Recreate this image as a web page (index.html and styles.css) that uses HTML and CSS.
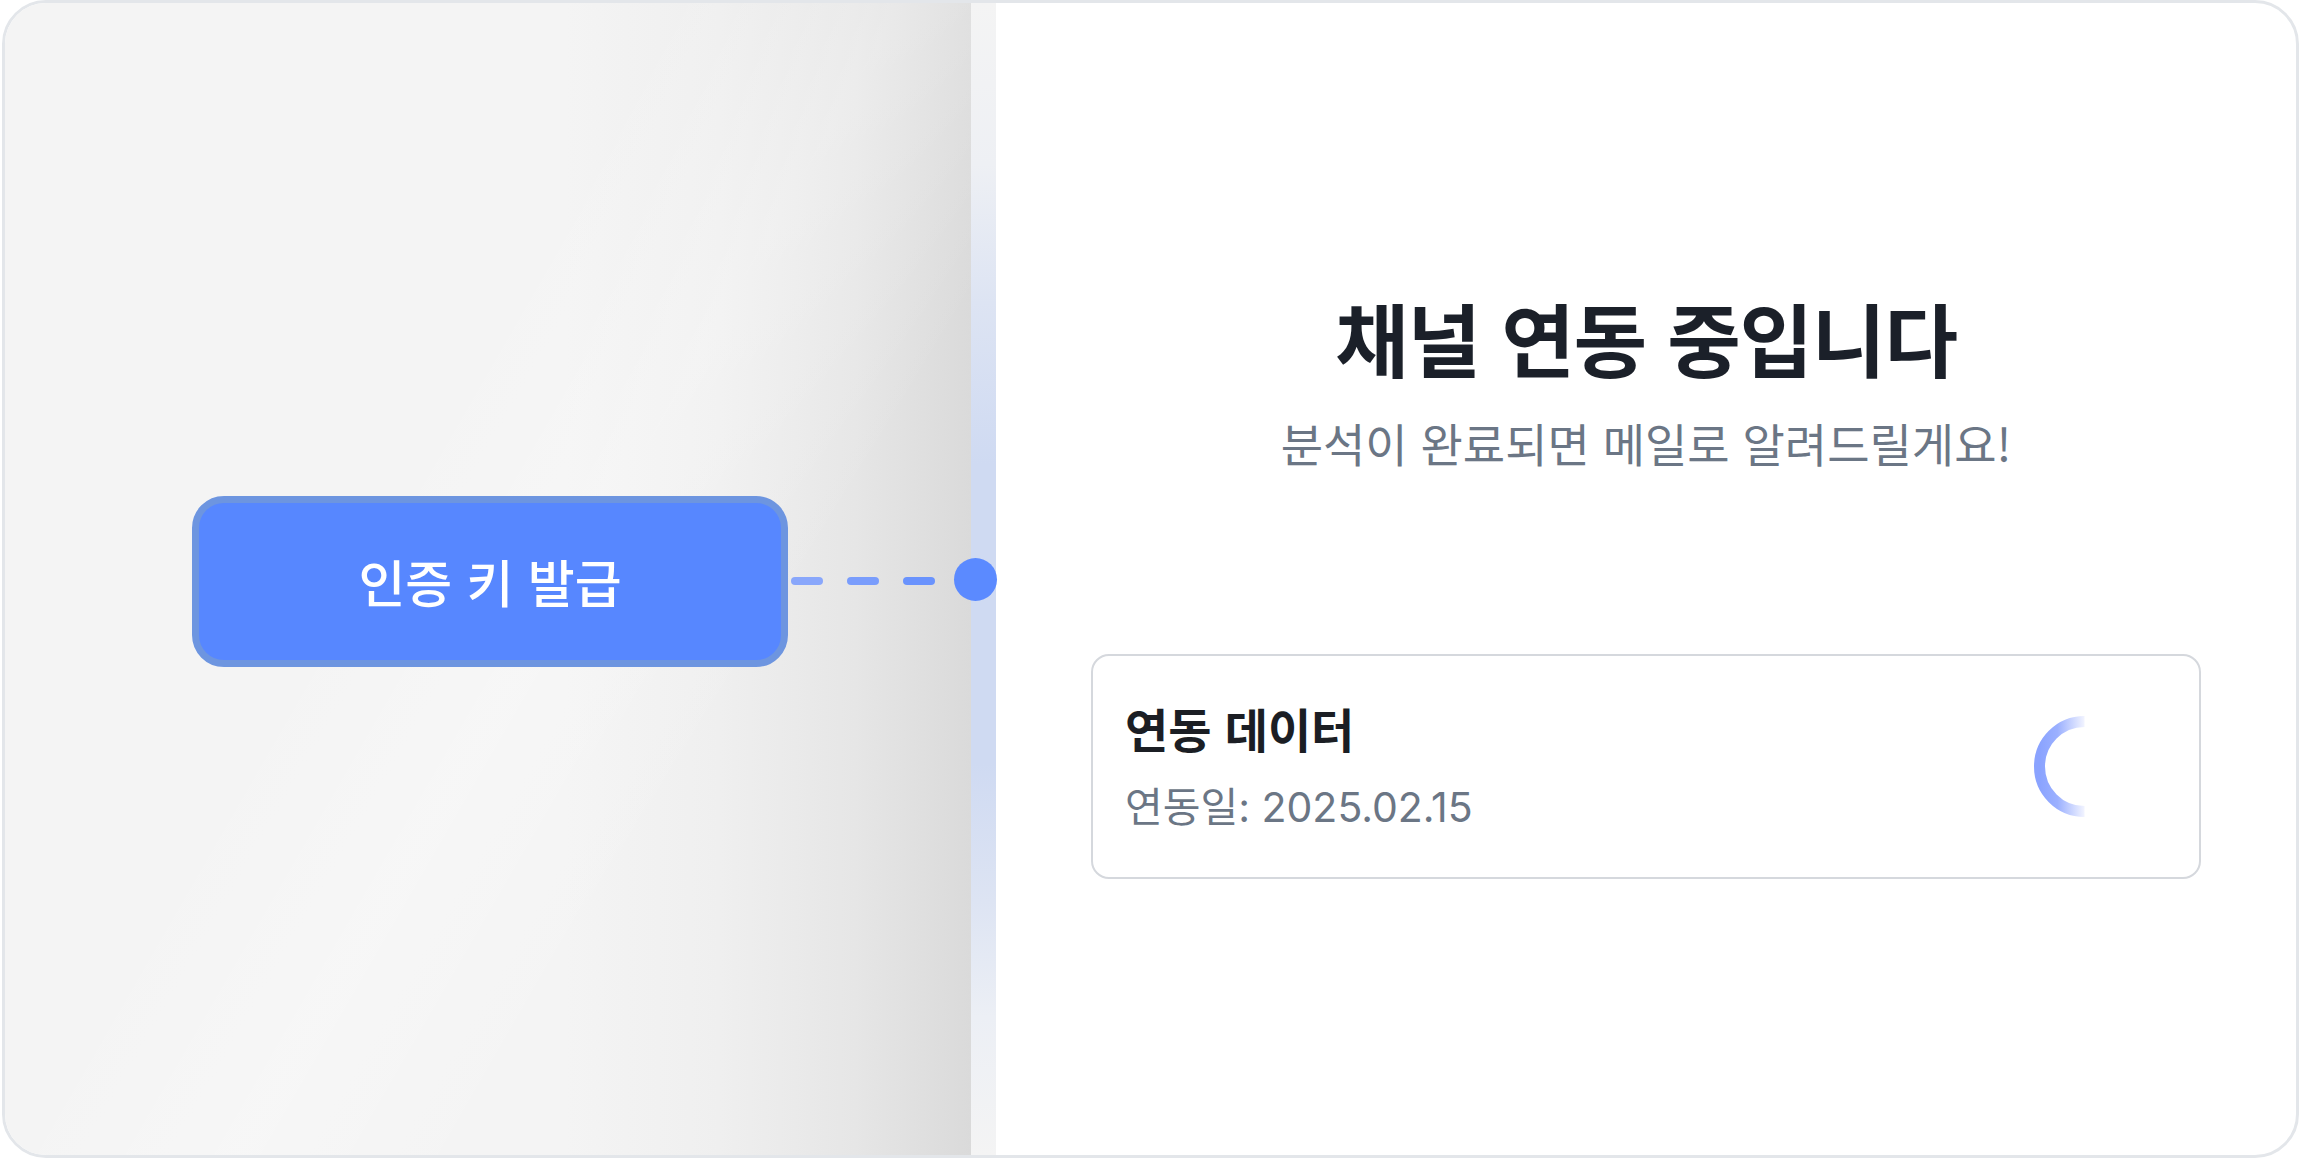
FILE: index.html
```html
<!DOCTYPE html>
<html lang="ko">
<head>
<meta charset="utf-8">
<title>채널 연동 중입니다</title>
<link rel="stylesheet" href="styles.css">
</head>
<body>
<div class="frame">
  <section class="left">
    <button class="issue-btn" type="button">인증 키 발급</button>
    <div class="connector">
      <span class="dash d1"></span>
      <span class="dash d2"></span>
      <span class="dash d3"></span>
    </div>
    <span class="node-dot"></span>
  </section>
  <div class="divider"></div>
  <section class="right">
    <h1 class="title">채널 연동 중입니다</h1>
    <p class="subtitle">분석이 완료되면 메일로 알려드릴게요!</p>
    <div class="data-card">
      <div class="data-text">
        <div class="data-title">연동 데이터</div>
        <div class="data-date">연동일: 2025.02.15</div>
      </div>
      <svg class="spinner" width="101" height="101" viewBox="0 0 101 101">
        <defs>
          <linearGradient id="spin" x1="0" y1="0" x2="1" y2="0">
            <stop offset="0" stop-color="#8aa3ff"/>
            <stop offset="0.4" stop-color="#9bb0ff"/>
            <stop offset="1" stop-color="#f2f4ff"/>
          </linearGradient>
        </defs>
        <path d="M50.5 5.5 A45 45 0 0 0 50.5 95.5" fill="none" stroke="url(#spin)" stroke-width="11"/>
      </svg>
    </div>
  </section>
</div>
</body>
</html>
```
FILE: styles.css
```css
* { box-sizing: border-box; }
html, body { margin: 0; padding: 0; background: #ffffff; }
body {
  font-family: Inter, "Noto Sans CJK KR", "Noto Sans", sans-serif;
  width: 2299px;
  height: 1160px;
  overflow: hidden;
}
.frame {
  margin-left: 2px;
  width: 2297px;
  height: 1158px;
  border: 3px solid #e3e6ea;
  border-radius: 44px;
  overflow: hidden;
  display: grid;
  grid-template-columns: 966px 25px 1fr;
  background: #ffffff;
}
.left {
  position: relative;
  display: flex;
  align-items: center;
  padding-left: 187px;
  padding-top: 4px;
  background:
    linear-gradient(120deg, rgba(255,255,255,0) 40%, rgba(255,255,255,0.25) 55%, rgba(255,255,255,0) 70%),
    linear-gradient(to right, #f4f4f4 0%, #f4f4f4 58%, #efefef 74%, #e6e6e6 88%, #dadada 100%);
}
.issue-btn {
  width: 596px;
  height: 171px;
  border: 7px solid #6d95e0;
  border-radius: 32px;
  background: #5787ff;
  color: #ffffff;
  font-family: "Noto Sans CJK KR", sans-serif;
  font-size: 51px;
  font-weight: 500;
  letter-spacing: 0;
  padding: 0;
  margin: 0;
}
.connector {
  display: flex;
  gap: 24px;
  margin-left: 3px;
}
.dash {
  display: block;
  width: 32px;
  height: 8px;
  border-radius: 4px;
}
.d1 { background: #89a7fb; }
.d2 { background: #7a9dfc; }
.d3 { background: #6a93fd; }
.node-dot {
  position: absolute;
  right: -26px;
  top: 50%;
  width: 43px;
  height: 43px;
  margin-top: -21px;
  border-radius: 50%;
  background: #5b8aff;
  z-index: 2;
}
.divider {
  background: linear-gradient(to bottom, #f4f4f4 0%, #eef0f4 14%, #dde4f3 26%, #cfdaf2 40%, #cfdaf2 66%, #dde4f3 78%, #eceff5 88%, #f4f4f4 100%);
}
.right {
  display: flex;
  flex-direction: column;
  align-items: center;
  justify-content: center;
  padding: 0 95px;
  padding-top: 8px;
}
.title {
  margin: 0;
  font-family: "Noto Sans CJK KR", sans-serif;
  font-size: 80px;
  line-height: 96px;
  font-weight: 700;
  color: #1b2029;
  letter-spacing: -1.2px;
}
.subtitle {
  margin: 27px 0 0 0;
  font-family: "Noto Sans CJK KR", sans-serif;
  font-size: 46px;
  line-height: 62px;
  font-weight: 400;
  color: #6b7685;
}
.data-card {
  margin-top: 181px;
  width: 1110px;
  height: 225px;
  border: 2px solid #d5d8dd;
  border-radius: 18px;
  display: flex;
  align-items: center;
  justify-content: space-between;
  padding: 0 64px 0 32px;
  background: #ffffff;
}
.data-text {
  display: flex;
  flex-direction: column;
  gap: 22px;
}
.data-title {
  font-family: "Noto Sans CJK KR", sans-serif;
  font-size: 47px;
  line-height: 60px;
  font-weight: 700;
  color: #1b1e24;
}
.data-date {
  font-size: 41px;
  line-height: 54px;
  font-weight: 400;
  color: #6b7685;
}
.spinner {
  display: block;
  flex: none;
}
```
